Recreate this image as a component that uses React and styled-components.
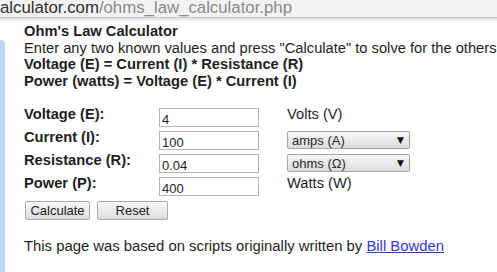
import styled, { createGlobalStyle } from 'styled-components';

const GlobalStyle = createGlobalStyle`
  html, body {
    margin: 0;
    padding: 0;
    background: #ffffff;
  }
  body {
    font-family: "Liberation Sans", Arial, sans-serif;
    color: #1e1e1e;
    overflow: hidden;
  }
`;

const Page = styled.div`
  width: 497px;
  height: 272px;
  overflow: hidden;
  display: flex;
  flex-direction: column;
`;

// Browser address bar strip across the top
const AddressBar = styled.div`
  height: 17px;
  background: #f2f2f2;
  border-bottom: 1px solid #c8c8c8;
  box-shadow: 0 1px 0 #e4e4e4, 0 2px 0 #eaeaea, 0 3px 0 #f4f4f4;
  font-size: 16.8px;
  line-height: 16px;
  white-space: nowrap;
`;

const Host = styled.span`
  color: #303030;
`;

const Path = styled.span`
  color: #8a8a8a;
`;

const Body = styled.div`
  flex: 1;
  display: flex;
  padding-top: 4px;
`;

const SideStrip = styled.div`
  width: 5px;
  margin-top: 18px;
  background: #bdd6f7;
  border-top-right-radius: 4px;
`;

const Content = styled.div`
  flex: 1;
  padding: 1px 0 0 19px;
  font-size: 14.7px;
  line-height: 16.5px;
`;

const Intro = styled.div`
  white-space: nowrap;
`;

const Title = styled.div`
  font-weight: bold;
`;

const Formula = styled.div`
  font-weight: bold;
`;

const FormGrid = styled.div`
  margin-top: 17px;
  display: grid;
  grid-template-columns: 135px 128px auto;
  grid-auto-rows: 23px;
  align-items: start;
`;

const Label = styled.div`
  font-weight: bold;
  line-height: 16px;
`;

const Field = styled.input`
  box-sizing: border-box;
  width: 100px;
  height: 19px;
  margin: 2px 0 0;
  padding: 3px 2px 0;
  border: 1px solid #b4b4b4;
  font-family: "Liberation Sans", Arial, sans-serif;
  font-size: 13px;
  color: #1e1e1e;
  outline: none;
`;

const Unit = styled.div`
  line-height: 16px;
`;

const SelectWrap = styled.div`
  position: relative;
  width: 123px;
  margin-top: 2px;
`;

const Select = styled.select`
  appearance: none;
  box-sizing: border-box;
  width: 123px;
  height: 18px;
  padding: 0 0 0 4px;
  border: 1px solid #a6a6a6;
  border-radius: 2px;
  background: linear-gradient(#f7f7f7, #dcdcdc);
  font-family: "Liberation Sans", Arial, sans-serif;
  font-size: 13px;
  color: #2a2a2a;
  outline: none;
`;

const Arrow = styled.span`
  position: absolute;
  right: 6px;
  top: 2px;
  font-family: "DejaVu Sans", sans-serif;
  font-size: 9px;
  line-height: 14px;
  color: #111;
  pointer-events: none;
`;

const Buttons = styled.div`
  display: flex;
  gap: 7px;
  margin: 3px 0 0 1px;
`;

const Button = styled.button`
  box-sizing: border-box;
  width: ${(p) => p.$w}px;
  height: 19px;
  padding: 0;
  border: 1px solid #aaaaaa;
  border-radius: 2px;
  background: linear-gradient(#f8f8f8, #dddddd);
  font-family: "Liberation Sans", Arial, sans-serif;
  font-size: 13px;
  color: #222;
`;

const Footer = styled.p`
  margin: 18px 0 0;
  font-size: 14.85px;
`;

const Link = styled.a`
  color: #3535dc;
  text-decoration: underline;
`;

const UnitSelect = ({ value }) => (
  <SelectWrap>
    <Select defaultValue={value}>
      <option>{value}</option>
    </Select>
    <Arrow>▼</Arrow>
  </SelectWrap>
);

export default function App() {
  return (
    <Page>
      <GlobalStyle />
      <AddressBar>
        <Host>alculator.com</Host>
        <Path>/ohms_law_calculator.php</Path>
      </AddressBar>
      <Body>
        <SideStrip />
        <Content>
          <Intro>
            <Title>Ohm's Law Calculator</Title>
            <div>Enter any two known values and press "Calculate" to solve for the others</div>
            <Formula>Voltage (E) = Current (I) * Resistance (R)</Formula>
            <Formula>Power (watts) = Voltage (E) * Current (I)</Formula>
          </Intro>
          <FormGrid>
            <Label>Voltage (E):</Label>
            <Field defaultValue="4" />
            <Unit>Volts (V)</Unit>
            <Label>Current (I):</Label>
            <Field defaultValue="100" />
            <UnitSelect value="amps (A)" />
            <Label>Resistance (R):</Label>
            <Field defaultValue="0.04" />
            <UnitSelect value="ohms (Ω)" />
            <Label>Power (P):</Label>
            <Field defaultValue="400" />
            <Unit>Watts (W)</Unit>
          </FormGrid>
          <Buttons>
            <Button $w={65}>Calculate</Button>
            <Button $w={71}>Reset</Button>
          </Buttons>
          <Footer>
            This page was based on scripts originally written by <Link href="#">Bill Bowden</Link>
          </Footer>
        </Content>
      </Body>
    </Page>
  );
}
